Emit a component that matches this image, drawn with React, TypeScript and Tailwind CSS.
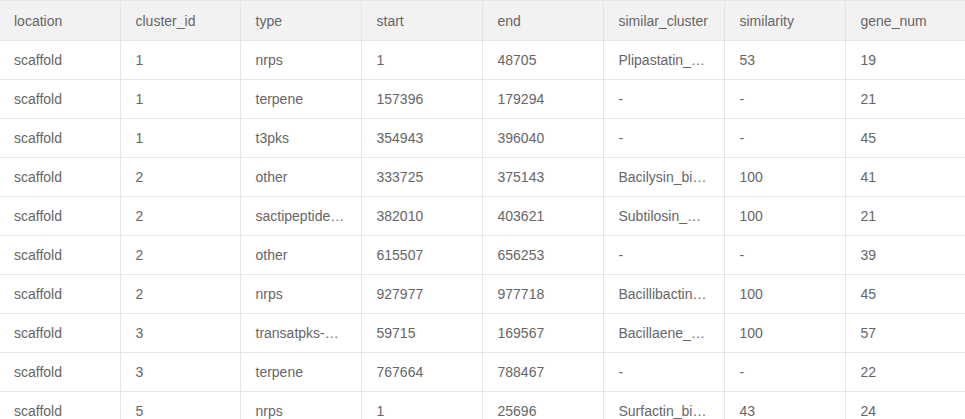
const columns = ["location", "cluster_id", "type", "start", "end", "similar_cluster", "similarity", "gene_num"];

// shown as the table displays them, cut with an ellipsis where the cell is too narrow
const rows = [
  ["scaffold", "1", "nrps", "1", "48705", "Plipastatin_…", "53", "19"],
  ["scaffold", "1", "terpene", "157396", "179294", "-", "-", "21"],
  ["scaffold", "1", "t3pks", "354943", "396040", "-", "-", "45"],
  ["scaffold", "2", "other", "333725", "375143", "Bacilysin_bi…", "100", "41"],
  ["scaffold", "2", "sactipeptide…", "382010", "403621", "Subtilosin_…", "100", "21"],
  ["scaffold", "2", "other", "615507", "656253", "-", "-", "39"],
  ["scaffold", "2", "nrps", "927977", "977718", "Bacillibactin…", "100", "45"],
  ["scaffold", "3", "transatpks-…", "59715", "169567", "Bacillaene_…", "100", "57"],
  ["scaffold", "3", "terpene", "767664", "788467", "-", "-", "22"],
  ["scaffold", "5", "nrps", "1", "25696", "Surfactin_bi…", "43", "24"],
];

export default function App() {
  return (
    <div className="w-[965px] h-[419px] overflow-hidden bg-white text-[14px] leading-[20px] text-[#666] font-['Liberation_Sans',Arial,sans-serif]">
      <table className="w-[965px] table-fixed border-collapse border-t border-[#e6e6e6]">
        <colgroup>
          <col className="w-[120px]" />
          <col className="w-[120px]" />
          <col className="w-[121px]" />
          <col className="w-[121px]" />
          <col className="w-[121px]" />
          <col className="w-[121px]" />
          <col className="w-[121px]" />
          <col className="w-[120px]" />
        </colgroup>
        <thead>
          <tr className="bg-[#f2f2f2]">
            {columns.map((c, i) => (
              <th
                key={c}
                className={`text-left font-normal whitespace-nowrap pt-[10px] pb-[9px] pr-[10px] border-b border-[#e6e6e6] ${i === 0 ? "pl-[14px]" : "pl-[15px] border-l"}`}
              >
                {c}
              </th>
            ))}
          </tr>
        </thead>
        <tbody>
          {rows.map((r, ri) => (
            <tr key={ri}>
              {r.map((v, i) => (
                <td
                  key={i}
                  className={`whitespace-nowrap py-[9px] pr-[10px] border-b border-[#e6e6e6] ${i === 0 ? "pl-[14px]" : "pl-[15px] border-l"}`}
                >
                  {v}
                </td>
              ))}
            </tr>
          ))}
        </tbody>
      </table>
    </div>
  );
}
